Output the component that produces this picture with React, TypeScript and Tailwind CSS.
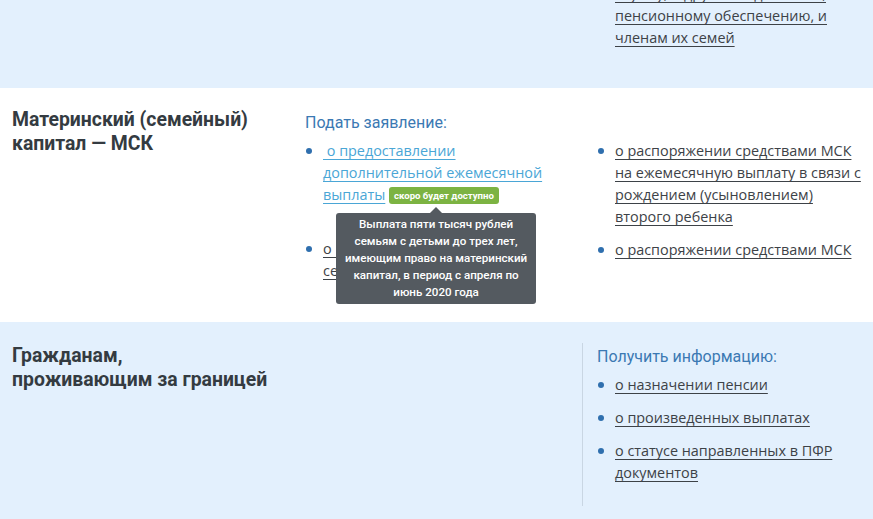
import React from 'react';

const linkDark = 'text-[#3d4247] underline underline-offset-[3px] decoration-[#3d4247]';

function Dot() {
  return (
    <span className="flex h-[22px] w-[18px] shrink-0 items-center">
      <span className="ml-[1px] block h-[6px] w-[6px] rounded-full bg-[#2f6fae]" />
    </span>
  );
}

function Item({ children, className = '' }: { children: React.ReactNode; className?: string }) {
  return (
    <li className={`flex ${className}`}>
      <Dot />
      <div className="min-w-0">{children}</div>
    </li>
  );
}

function Heading({ children }: { children: React.ReactNode }) {
  return (
    <h2 className="font-['Roboto',sans-serif] text-[19.4px] font-bold leading-[24px] text-[#343b41]">{children}</h2>
  );
}

function SubHeading({ children }: { children: React.ReactNode }) {
  return <h3 className="mb-[6px] font-['Roboto',sans-serif] text-[16px] leading-[22px] text-[#3b79b3]">{children}</h3>;
}

export default function App() {
  return (
    <div className="min-h-[519px] bg-[#e3f0fd] font-['Open_Sans',sans-serif] text-[14.4px] leading-[22px]">
      {/* tail of the previous block */}
      <section className="grid h-[88px] grid-cols-[290px_292px_1fr] overflow-hidden bg-[#e3f0fd]">
        <div />
        <div />
        <div className="pl-[33px] -mt-[17px]">
          <a className={linkDark}>службу, и другим ведомствам,</a>
          <br />
          <a className={linkDark}>пенсионному обеспечению, и</a>
          <br />
          <a className={linkDark}>членам их семей</a>
        </div>
      </section>

      {/* Материнский капитал */}
      <section className="grid grid-cols-[290px_292px_1fr] bg-white pt-[19px] pb-[40px]">
        <div className="pl-3 pt-[1px]">
          <Heading>
            Материнский (семейный)
            <br />
            капитал — МСК
          </Heading>
        </div>
        <div className="pl-[15px] pt-[5px]">
          <SubHeading>Подать заявление:</SubHeading>
          <ul>
            <Item className="mb-[32px]">
              <div className="relative">
                <a className="text-[#4aa6d6] underline underline-offset-[3px] decoration-[#4aa6d6]">
                  &nbsp;о предоставлении
                  <br />
                  дополнительной ежемесячной
                  <br />
                  выплаты
                </a>{' '}
                <span className="relative inline-block rounded-[3px] bg-[#7cb342] px-[5px] align-[1px] font-['Roboto',sans-serif] text-[9.6px] font-bold leading-[17px] text-white">
                  скоро будет доступно
                  <span className="absolute left-[-53px] top-[20px] z-10 w-[200px]">
                    <span className="block h-0 w-0 border-x-[6px] border-b-[6px] border-x-transparent border-b-[#545a60]" style={{ marginLeft: 94 }} />
                    <span className="block rounded-[3px] bg-[#545a60] px-[6px] py-[3px] text-center font-['Roboto',sans-serif] text-[11.6px] font-medium leading-[17px] text-white">
                      Выплата пяти тысяч рублей семьям с детьми до трех лет, имеющим право на материнский капитал, в период с апреля по июнь 2020 года
                    </span>
                  </span>
                </span>
              </div>
            </Item>
            <Item>
              <a className={linkDark}>
                о выдаче государственного
                <br />
                сертификата на МСК
              </a>
            </Item>
          </ul>
        </div>
        <div className="pl-[15px] pr-[10px] pt-[33px]">
          <ul>
            <Item className="mb-[11px]">
              <a className={linkDark}>
                о распоряжении средствами МСК на ежемесячную выплату в связи с рождением (усыновлением) второго ребенка
              </a>
            </Item>
            <Item>
              <a className={linkDark}>о распоряжении средствами МСК</a>
            </Item>
          </ul>
        </div>
      </section>

      {/* Гражданам за границей */}
      <section className="grid grid-cols-[290px_292px_1fr] bg-[#e3f0fd] pt-[21px]">
        <div className="pl-3 pt-[1px]">
          <Heading>
            Гражданам,
            <br />
            проживающим за границей
          </Heading>
        </div>
        <div />
        <div className="border-l border-[#c9d6e3] pl-[14px] pt-[3px] pb-[22px]">
          <SubHeading>Получить информацию:</SubHeading>
          <ul className="flex flex-col gap-[11px]">
            <Item>
              <a className={linkDark}>о назначении пенсии</a>
            </Item>
            <Item>
              <a className={linkDark}>о произведенных выплатах</a>
            </Item>
            <Item>
              <a className={linkDark}>
                о статусе направленных в ПФР
                <br />
                документов
              </a>
            </Item>
          </ul>
        </div>
      </section>
    </div>
  );
}
